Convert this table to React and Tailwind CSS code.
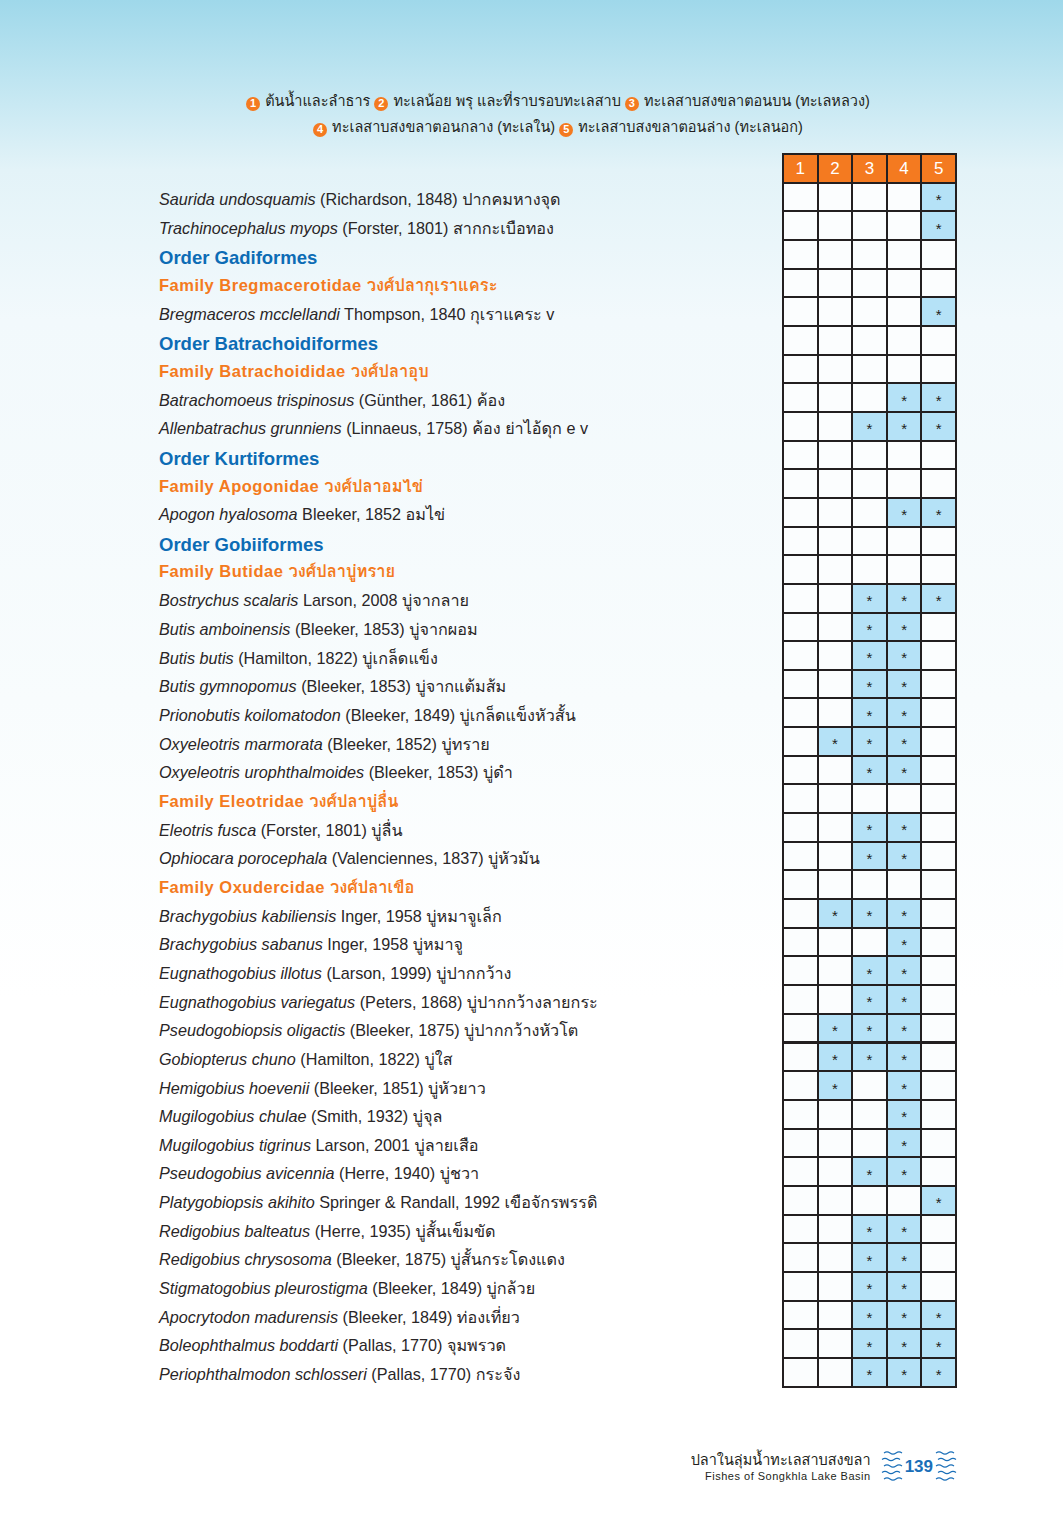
import React from "react";

const rows = [
  { t: "s", i: "Saurida undosquamis", r: "(Richardson, 1848) ปากคมหางจุด", c: [5] },
  { t: "s", i: "Trachinocephalus myops", r: "(Forster, 1801) สากกะเบือทอง", c: [5] },
  { t: "o", x: "Order Gadiformes" },
  { t: "f", x: "Family Bregmacerotidae ", th: "วงศ์ปลากุเราแคระ" },
  { t: "s", i: "Bregmaceros mcclellandi", r: "Thompson, 1840 กุเราแคระ v", c: [5] },
  { t: "o", x: "Order Batrachoidiformes" },
  { t: "f", x: "Family Batrachoididae ", th: "วงศ์ปลาอุบ" },
  { t: "s", i: "Batrachomoeus trispinosus", r: "(Günther, 1861) ค้อง", c: [4, 5] },
  { t: "s", i: "Allenbatrachus grunniens", r: "(Linnaeus, 1758) ค้อง ย่าไอ้ดุก e v", c: [3, 4, 5] },
  { t: "o", x: "Order Kurtiformes" },
  { t: "f", x: "Family Apogonidae ", th: "วงศ์ปลาอมไข่" },
  { t: "s", i: "Apogon hyalosoma", r: "Bleeker, 1852 อมไข่", c: [4, 5] },
  { t: "o", x: "Order Gobiiformes" },
  { t: "f", x: "Family Butidae ", th: "วงศ์ปลาบู่ทราย" },
  { t: "s", i: "Bostrychus scalaris", r: "Larson, 2008 บู่จากลาย", c: [3, 4, 5] },
  { t: "s", i: "Butis amboinensis", r: "(Bleeker, 1853) บู่จากผอม", c: [3, 4] },
  { t: "s", i: "Butis butis", r: "(Hamilton, 1822) บู่เกล็ดแข็ง", c: [3, 4] },
  { t: "s", i: "Butis gymnopomus", r: "(Bleeker, 1853) บู่จากแต้มส้ม", c: [3, 4] },
  { t: "s", i: "Prionobutis koilomatodon", r: "(Bleeker, 1849) บู่เกล็ดแข็งหัวสั้น", c: [3, 4] },
  { t: "s", i: "Oxyeleotris marmorata", r: "(Bleeker, 1852) บู่ทราย", c: [2, 3, 4] },
  { t: "s", i: "Oxyeleotris urophthalmoides", r: "(Bleeker, 1853) บู่ดำ", c: [3, 4] },
  { t: "f", x: "Family Eleotridae ", th: "วงศ์ปลาบู่ลื่น" },
  { t: "s", i: "Eleotris fusca", r: "(Forster, 1801) บู่ลื่น", c: [3, 4] },
  { t: "s", i: "Ophiocara porocephala", r: "(Valenciennes, 1837) บู่หัวมัน", c: [3, 4] },
  { t: "f", x: "Family Oxudercidae ", th: "วงศ์ปลาเขือ" },
  { t: "s", i: "Brachygobius kabiliensis", r: "Inger, 1958 บู่หมาจูเล็ก", c: [2, 3, 4] },
  { t: "s", i: "Brachygobius sabanus", r: "Inger, 1958 บู่หมาจู", c: [4] },
  { t: "s", i: "Eugnathogobius illotus", r: "(Larson, 1999) บู่ปากกว้าง", c: [3, 4] },
  { t: "s", i: "Eugnathogobius variegatus", r: "(Peters, 1868) บู่ปากกว้างลายกระ", c: [3, 4] },
  { t: "s", i: "Pseudogobiopsis oligactis", r: "(Bleeker, 1875) บู่ปากกว้างหัวโต", c: [2, 3, 4] },
  { t: "s", i: "Gobiopterus chuno", r: "(Hamilton, 1822) บู่ใส", c: [2, 3, 4] },
  { t: "s", i: "Hemigobius hoevenii", r: "(Bleeker, 1851) บู่หัวยาว", c: [2, 4] },
  { t: "s", i: "Mugilogobius chulae", r: "(Smith, 1932) บู่จุล", c: [4] },
  { t: "s", i: "Mugilogobius tigrinus", r: "Larson, 2001 บู่ลายเสือ", c: [4] },
  { t: "s", i: "Pseudogobius avicennia", r: "(Herre, 1940) บู่ชวา", c: [3, 4] },
  { t: "s", i: "Platygobiopsis akihito", r: "Springer & Randall, 1992 เขือจักรพรรดิ", c: [5] },
  { t: "s", i: "Redigobius balteatus", r: "(Herre, 1935) บู่สั้นเข็มขัด", c: [3, 4] },
  { t: "s", i: "Redigobius chrysosoma", r: "(Bleeker, 1875) บู่สั้นกระโดงแดง", c: [3, 4] },
  { t: "s", i: "Stigmatogobius pleurostigma", r: "(Bleeker, 1849) บู่กล้วย", c: [3, 4] },
  { t: "s", i: "Apocrytodon madurensis", r: "(Bleeker, 1849) ท่องเที่ยว", c: [3, 4, 5] },
  { t: "s", i: "Boleophthalmus boddarti", r: "(Pallas, 1770) จุมพรวด", c: [3, 4, 5] },
  { t: "s", i: "Periophthalmodon schlosseri", r: "(Pallas, 1770) กระจัง", c: [3, 4, 5] },
];

const font = {
  fontFamily:
    '"Liberation Sans", Loma, Garuda, Waree, "Noto Sans Thai Looped", "Noto Sans Thai", "Noto Sans", sans-serif',
};

function Num({ n }) {
  return (
    <span className="inline-flex items-center justify-center w-[14px] h-[14px] rounded-full bg-[#f47a20] text-white text-[11px] font-bold leading-none mr-[5px] align-[-1px]">
      {n}
    </span>
  );
}

function Waves({ flip }) {
  return (
    <svg width="22" height="32" viewBox="0 0 22 32" className={flip ? "-scale-x-100" : ""}>
      {[3, 9.5, 16, 22.5, 29].map((y, k) => (
        <path
          key={y}
          d={`M${k % 2 ? 1 : 3} ${y} q3 -2.2 6 0 t6 0 t6 0`}
          fill="none"
          stroke="#1a6fb8"
          strokeWidth="1.1"
        />
      ))}
    </svg>
  );
}

export default function App() {
  return (
    <div
      className="w-[1063px] min-h-[1536px] text-[#231f20] bg-[linear-gradient(180deg,#9fd8ea_0px,#bfe5f1_80px,#e3f3f8_170px,#f2f9fc_320px,#f8fcfd_700px,#ffffff_1000px)]"
      style={font}
    >
      <div className="ml-[159px] w-[798px] pt-[88px]">
        <div className="text-center text-[14.5px] leading-[26px]">
          <div>
            <Num n={1} />ต้นน้ำและลำธาร <Num n={2} />ทะเลน้อย พรุ และที่ราบรอบทะเลสาบ <Num n={3} />ทะเลสาบสงขลาตอนบน (ทะเลหลวง)
          </div>
          <div>
            <Num n={4} />ทะเลสาบสงขลาตอนกลาง (ทะเลใน) <Num n={5} />ทะเลสาบสงขลาตอนล่าง (ทะเลนอก)
          </div>
        </div>

        <div className="flex mt-[13px]">
          <div className="flex-1 pt-[31px]">
            {rows.map((r, k) => (
              <div key={k} className="h-[28.67px] flex items-center pt-[2px] whitespace-nowrap">
                {r.t === "s" && (
                  <span className="text-[16.2px] text-[#2a2627]">
                    <i>{r.i}</i> {r.r}
                  </span>
                )}
                {r.t === "o" && (
                  <span className="text-[18.5px] font-bold text-[#0c6cb5] pt-[3px]">{r.x}</span>
                )}
                {r.t === "f" && (
                  <span className="text-[16.5px] font-bold text-[#f47a20]">
                    <span className="tracking-[0.5px]">{r.x}</span>
                    {r.th}
                  </span>
                )}
              </div>
            ))}
          </div>

          <div className="w-[175px] bg-[#231f20] p-[2px] grid grid-cols-5 gap-[2px]">
            {[1, 2, 3, 4, 5].map((n) => (
              <div key={n} className="h-[26.67px] bg-[#f47a20] text-white text-[17px] flex items-center justify-center">
                {n}
              </div>
            ))}
            {rows.map((r, k) =>
              [1, 2, 3, 4, 5].map((n) => {
                const on = r.t === "s" && r.c.includes(n);
                return (
                  <div
                    key={k + "-" + n}
                    className={
                      "h-[26.67px] flex items-center justify-center text-[15px] leading-none pt-[5px] " +
                      (on ? "bg-[#b5e2f7]" : "bg-[#fbfdfe]")
                    }
                  >
                    {on ? "*" : ""}
                  </div>
                );
              })
            )}
          </div>
        </div>

        <div className="flex justify-end items-center mt-[60px]">
          <div className="text-right mr-[10px] pt-[3px]">
            <div className="text-[14.5px] leading-[18px]">ปลาในลุ่มน้ำทะเลสาบสงขลา</div>
            <div className="text-[11px] leading-[15px] tracking-[0.5px]">Fishes of Songkhla Lake Basin</div>
          </div>
          <Waves />
          <div className="text-[#1a6fb8] font-bold text-[17px] mx-[2px] pt-[2px]">139</div>
          <Waves flip />
        </div>
      </div>
    </div>
  );
}
